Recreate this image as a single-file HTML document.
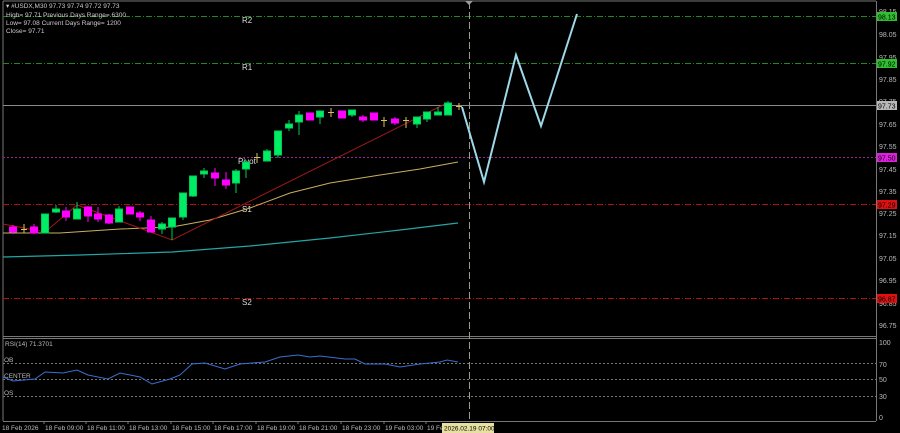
<!DOCTYPE html>
<html><head><meta charset="utf-8"><style>
html,body{margin:0;padding:0;background:#000;width:900px;height:433px;overflow:hidden}
svg{display:block}
text{font-family:"Liberation Sans",sans-serif}
</style></head><body>
<svg width="900" height="433" viewBox="0 0 900 433" xmlns="http://www.w3.org/2000/svg">
<rect width="900" height="433" fill="#000"/>
<!-- borders -->
<line x1="3" y1="1" x2="3" y2="421" stroke="#777" stroke-width="1"/>
<line x1="3" y1="1" x2="876" y2="1" stroke="#777"/>
<line x1="876.5" y1="1" x2="876.5" y2="421" stroke="#777"/>
<line x1="3" y1="336.5" x2="876" y2="336.5" stroke="#777"/>
<line x1="3" y1="338.5" x2="876" y2="338.5" stroke="#777"/>
<line x1="3" y1="421.5" x2="876" y2="421.5" stroke="#777"/>
<!-- pivot lines -->
<g stroke-width="1" fill="none">
<line x1="3" y1="16.5" x2="876" y2="16.5" stroke="#1f8a1f" stroke-dasharray="6,2,1,2"/>
<line x1="3" y1="63.5" x2="876" y2="63.5" stroke="#1f8a1f" stroke-dasharray="6,2,1,2"/>
<line x1="3" y1="105.5" x2="876" y2="105.5" stroke="#8a8a8a"/>
<line x1="3" y1="157.5" x2="876" y2="157.5" stroke="#a020a0" stroke-dasharray="2,2"/>
<line x1="3" y1="204.5" x2="876" y2="204.5" stroke="#b01010" stroke-dasharray="6,2,1,2"/>
<line x1="3" y1="298.5" x2="876" y2="298.5" stroke="#b01010" stroke-dasharray="6,2,1,2"/>
</g>
<g fill="#ddd" font-size="8">
<text x="242" y="23">R2</text><text x="242" y="70">R1</text>
<text x="238" y="164">Pivot</text><text x="242" y="212">S1</text><text x="242" y="305">S2</text>
</g>
<!-- MAs -->
<polyline fill="none" stroke="#25a5a5" stroke-width="1.2" points="3,257 80,255 172,252 250,246 330,238 400,230 458,223"/>
<polyline fill="none" stroke="#c8b060" stroke-width="1" points="3,233 60,233 120,229 172,227 210,220 250,208 290,193 330,183 380,175 420,169 458,162"/>
<polyline fill="none" stroke="#a01818" stroke-width="1" points="3,224 45,232 77,205 172,240 447,103"/>
<!-- candles -->
<g id="c"></g>
<!-- vertical dashed -->
<line x1="469.5" y1="2" x2="469.5" y2="421" stroke="#9a9a8a" stroke-dasharray="7,3"/>
<polygon points="465,1 473,1 469,5" fill="#999"/>
<!-- zigzag -->
<polyline fill="none" stroke="#9fd8e8" stroke-width="2" points="462,107 484,182 516,55 541,126 577,14"/>
<!-- header text -->
<g fill="#ccc" font-size="6.5">
<text x="6" y="8">▾  #USDX,M30  97.73 97.74 97.72 97.73</text>
<text x="6" y="17">High= 97.71    Previous Days Range= 6300</text>
<text x="6" y="25">Low= 97.08    Current Days Range= 1200</text>
<text x="6" y="33">Close= 97.71</text>
</g>
<!-- right axis -->
<g fill="#bbb" font-size="7">
<text x="879" y="14">98.15</text><text x="879" y="37">98.05</text><text x="879" y="60">97.95</text>
<text x="879" y="82">97.85</text><text x="879" y="104">97.75</text><text x="879" y="127">97.65</text>
<text x="879" y="149">97.55</text><text x="879" y="172">97.45</text><text x="879" y="194">97.35</text>
<text x="879" y="216">97.25</text><text x="879" y="238">97.15</text><text x="879" y="261">97.05</text>
<text x="879" y="283">96.95</text><text x="879" y="306">96.85</text><text x="879" y="328">96.75</text>
<text x="879" y="345">100</text><text x="879" y="367">70</text><text x="879" y="382">50</text>
<text x="879" y="399">30</text><text x="879" y="420">0</text>
</g>
<g font-size="7">
<rect x="877" y="12" width="20" height="9" fill="#2ec02e"/><text x="878" y="19.5" fill="#000">98.13</text>
<rect x="877" y="59" width="20" height="9" fill="#2ec02e"/><text x="878" y="66.5" fill="#000">97.92</text>
<rect x="877" y="101" width="20" height="9" fill="#b8b8b8"/><text x="878" y="108.5" fill="#000">97.73</text>
<rect x="877" y="153" width="20" height="9" fill="#e020e0"/><text x="878" y="160.5" fill="#000">97.50</text>
<rect x="877" y="200" width="20" height="9" fill="#e01010"/><text x="878" y="207.5" fill="#000">97.29</text>
<rect x="877" y="294" width="20" height="9" fill="#e01010"/><text x="878" y="301.5" fill="#000">96.87</text>
</g>
<!-- RSI -->
<g stroke="#777" stroke-dasharray="2,2">
<line x1="3" y1="363.5" x2="876" y2="363.5"/><line x1="3" y1="379.5" x2="876" y2="379.5"/><line x1="3" y1="396.5" x2="876" y2="396.5"/>
</g>
<g fill="#bbb" font-size="6.5">
<text x="5" y="346">RSI(14) 71.3701</text>
<text x="4" y="362">OB</text><text x="4" y="378">CENTER</text><text x="4" y="395">OS</text>
</g>
<polyline fill="none" stroke="#3a6fd0" stroke-width="1" points="3,377 13,381 35,379 45,372 63,373 77,370 88,375 108,379 120,373 140,377 152,384 170,379 180,375 192,364 205,363 225,369 240,364 265,362 280,357 298,355 310,357 320,356 345,359 355,359 365,364 385,364 400,367 420,364 440,362 447,360 458,362"/>
<!-- time axis -->
<g stroke="#777"><line x1="44" y1="421" x2="44" y2="424"/><line x1="86" y1="421" x2="86" y2="424"/><line x1="128" y1="421" x2="128" y2="424"/><line x1="171" y1="421" x2="171" y2="424"/><line x1="213" y1="421" x2="213" y2="424"/><line x1="256" y1="421" x2="256" y2="424"/><line x1="298" y1="421" x2="298" y2="424"/><line x1="341" y1="421" x2="341" y2="424"/><line x1="384" y1="421" x2="384" y2="424"/><line x1="426" y1="421" x2="426" y2="424"/></g>
<g fill="#bbb" font-size="6.5">
<text x="2" y="430">18 Feb 2026</text><text x="45" y="430">18 Feb 09:00</text><text x="87" y="430">18 Feb 11:00</text>
<text x="129" y="430">18 Feb 13:00</text><text x="172" y="430">18 Feb 15:00</text><text x="214" y="430">18 Feb 17:00</text>
<text x="257" y="430">18 Feb 19:00</text><text x="299" y="430">18 Feb 21:00</text><text x="342" y="430">18 Feb 23:00</text>
<text x="385" y="430">19 Feb 03:00</text><text x="427" y="430">19 Fe</text>
</g>
<rect x="442" y="423" width="52" height="10" fill="#e8e0a0"/>
<text x="444" y="430.5" fill="#000" font-size="6.5">2026.02.19 07:00</text>

<g>
<!-- x,top,bottom,wt,wb,type -->
<g stroke-width="1">
<!-- pink -->
<g fill="#ff00ff" stroke="#ff00ff">
<line x1="13" y1="225" x2="13" y2="234"/><rect x="9.5" y="227" width="7" height="5"/>
<line x1="34" y1="224" x2="34" y2="234"/><rect x="30.5" y="227" width="7" height="6"/>
<line x1="66" y1="207" x2="66" y2="221"/><rect x="62.5" y="211" width="7" height="6"/>
<line x1="88" y1="206" x2="88" y2="222"/><rect x="84.5" y="207" width="7" height="9"/>
<line x1="98" y1="207" x2="98" y2="222"/><rect x="94.5" y="214" width="7" height="5"/>
<line x1="109" y1="214" x2="109" y2="224"/><rect x="105.5" y="215" width="7" height="8"/>
<rect x="126.5" y="207" width="7" height="7"/>
<line x1="140" y1="211" x2="140" y2="221"/><rect x="136.5" y="213" width="7" height="4"/>
<line x1="151" y1="216" x2="151" y2="232"/><rect x="147.5" y="220" width="7" height="12"/>
<line x1="215" y1="168" x2="215" y2="186"/><rect x="211.5" y="173" width="7" height="5"/>
<line x1="226" y1="172" x2="226" y2="189"/><rect x="222.5" y="180" width="7" height="5"/>
<rect x="306.5" y="113" width="7" height="7"/>
<rect x="338.5" y="111" width="7" height="7"/>
<line x1="363" y1="115" x2="363" y2="122"/><rect x="359.5" y="117" width="7" height="3"/>
<rect x="370.5" y="113" width="7" height="7"/>
<line x1="395" y1="117" x2="395" y2="125"/><rect x="391.5" y="119" width="7" height="4"/>
</g>
<!-- green -->
<g fill="#00ee66" stroke="#00cc55">
<rect x="41.5" y="214" width="7" height="19"/>
<line x1="56" y1="205" x2="56" y2="213"/><rect x="52.5" y="209" width="7" height="3"/>
<line x1="77" y1="202" x2="77" y2="219"/><rect x="73.5" y="209" width="7" height="10"/>
<line x1="119" y1="206" x2="119" y2="222"/><rect x="115.5" y="209" width="7" height="13"/>
<line x1="162" y1="222" x2="162" y2="234"/><rect x="158.5" y="224" width="7" height="5"/>
<line x1="172" y1="218" x2="172" y2="240"/><rect x="168.5" y="218" width="7" height="9"/>
<line x1="183" y1="193" x2="183" y2="220"/><rect x="179.5" y="193" width="7" height="24"/>
<line x1="193" y1="176" x2="193" y2="197"/><rect x="189.5" y="176" width="7" height="20"/>
<line x1="204" y1="168" x2="204" y2="178"/><rect x="200.5" y="171" width="7" height="3"/>
<line x1="236" y1="169" x2="236" y2="193"/><rect x="232.5" y="171" width="7" height="12"/>
<line x1="246" y1="162" x2="246" y2="178"/><rect x="242.5" y="162" width="7" height="7"/>
<line x1="267" y1="149" x2="267" y2="161"/><rect x="263.5" y="151" width="7" height="10"/>
<line x1="278" y1="131" x2="278" y2="158"/><rect x="274.5" y="131" width="7" height="24"/>
<line x1="289" y1="120" x2="289" y2="131"/><rect x="285.5" y="124" width="7" height="4"/>
<line x1="299" y1="111" x2="299" y2="135"/><rect x="295.5" y="115" width="7" height="7"/>
<line x1="320" y1="111" x2="320" y2="124"/><rect x="316.5" y="111" width="7" height="6"/>
<line x1="352" y1="110" x2="352" y2="117"/><rect x="348.5" y="110" width="7" height="5"/>
<line x1="417" y1="117" x2="417" y2="128"/><rect x="413.5" y="117" width="7" height="7"/>
<line x1="427" y1="112" x2="427" y2="122"/><rect x="423.5" y="112" width="7" height="7"/>
<line x1="438" y1="107" x2="438" y2="115"/><rect x="434.5" y="112" width="7" height="3"/>
<line x1="448" y1="101" x2="448" y2="115"/><rect x="444.5" y="103" width="7" height="12"/>
</g>
<!-- dojis -->
<g stroke="#d8c060">
<line x1="21" y1="229.5" x2="27" y2="229.5"/><line x1="24" y1="224" x2="24" y2="233"/>
<line x1="254" y1="157.5" x2="260" y2="157.5"/><line x1="257" y1="153" x2="257" y2="163"/>
<line x1="328" y1="112.5" x2="334" y2="112.5"/><line x1="331" y1="108" x2="331" y2="117"/>
<line x1="381" y1="120.5" x2="387" y2="120.5"/><line x1="384" y1="117" x2="384" y2="127"/>
<line x1="403" y1="120.5" x2="409" y2="120.5"/><line x1="406" y1="117" x2="406" y2="128"/>
<line x1="456" y1="106.5" x2="462" y2="106.5"/><line x1="459" y1="103" x2="459" y2="110"/>
</g>
</g>
</g>
</svg>
</body></html>
